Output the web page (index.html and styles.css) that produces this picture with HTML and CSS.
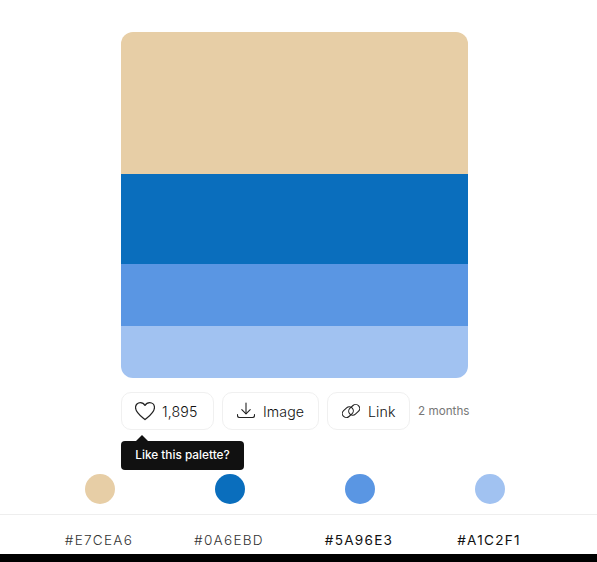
FILE: index.html
```html
<!DOCTYPE html>
<html lang="en">
<head>
    <meta charset="UTF-8">
    <meta name="viewport" content="width=device-width, initial-scale=1.0">
    <title>Palette</title>
    <link rel="stylesheet" href="styles.css">
</head>
<body>
    <main class="page">
        <div class="palette">
            <div class="strip strip-1"></div>
            <div class="strip strip-2"></div>
            <div class="strip strip-3"></div>
            <div class="strip strip-4"></div>
        </div>

        <div class="actions">
            <button class="btn btn-like">
                <svg width="20" height="20" viewBox="1.5 1.5 19 19" fill="none" stroke="#222" stroke-width="1.15" stroke-linejoin="round">
                    <path d="M11 19.2 C8 16.6 2 12.6 2 7.7 C2 4.9 4.1 3 6.6 3 C8.4 3 10 3.9 11 5.7 C12 3.9 13.6 3 15.4 3 C17.9 3 20 4.9 20 7.7 C20 12.6 14 16.6 11 19.2 Z"/>
                </svg>
                <span>1,895</span>
            </button>
            <button class="btn btn-image">
                <svg width="18" height="18" viewBox="1 1 18 18" fill="none" stroke="#222" stroke-width="1.1" stroke-linecap="round" stroke-linejoin="round">
                    <path d="M10 2 V12.5"/>
                    <path d="M5.8 8.6 L10 12.8 L14.2 8.6"/>
                    <path d="M1.5 13.5 V14.5 Q1.5 16.5 3.5 16.5 H16.5 Q18.5 16.5 18.5 14.5 V13.5"/>
                </svg>
                <span>Image</span>
            </button>
            <button class="btn btn-link">
                <svg width="18" height="18" viewBox="1 1 18 18" fill="none" stroke="#222" stroke-width="1.1">
                    <rect x="0.8" y="7.2" width="12" height="8" rx="4" transform="rotate(-42 6.8 11.2)"/>
                    <rect x="7.2" y="4.8" width="12" height="8" rx="4" transform="rotate(-42 13.2 8.8)"/>
                </svg>
                <span>Link</span>
            </button>
            <span class="age">2 months</span>
            <div class="tooltip">Like this palette?</div>
        </div>

        <div class="dots">
            <div class="dot-cell"><div class="dot dot-1"></div></div>
            <div class="dot-cell"><div class="dot dot-2"></div></div>
            <div class="dot-cell"><div class="dot dot-3"></div></div>
            <div class="dot-cell"><div class="dot dot-4"></div></div>
        </div>

        <div class="codes">
            <div class="code code-light">#E7CEA6</div>
            <div class="code code-light">#0A6EBD</div>
            <div class="code">#5A96E3</div>
            <div class="code">#A1C2F1</div>
        </div>
    </main>
    <div class="bottom-bar"></div>
</body>
</html>
```

FILE: styles.css
```css
html, body {
    margin: 0;
    padding: 0;
    background-color: #fff;
    overflow: hidden;
}

body {
    font-family: Inter, "Liberation Sans", sans-serif;
    color: #222;
    height: 562px;
    display: flex;
    flex-direction: column;
}

.page {
    flex: 1;
    padding-top: 32px;
}

.palette {
    width: 347px;
    height: 346px;
    margin-left: 121px;
    border-radius: 12px;
    overflow: hidden;
    display: flex;
    flex-direction: column;
}

.strip-1 { height: 142px; background-color: #e7cea6; }
.strip-2 { height: 90px; background-color: #0a6ebd; }
.strip-3 { height: 62px; background-color: #5a96e3; }
.strip-4 { height: 52px; background-color: #a1c2f1; }

.actions {
    position: relative;
    display: flex;
    align-items: center;
    gap: 8px;
    margin-top: 14px;
    margin-left: 121px;
    height: 38px;
}

.btn {
    display: flex;
    align-items: center;
    gap: 8px;
    height: 38px;
    padding: 0 0 0 14px;
    box-sizing: border-box;
    background-color: #fff;
    border: 1px solid #f0f0f0;
    border-radius: 10px;
    font-family: inherit;
    font-size: 14.2px;
    font-weight: 300;
    letter-spacing: 0.1px;
    color: #111;
    cursor: pointer;
}

.btn-like { width: 93px; padding-left: 13px; gap: 7px; }
.btn-image { width: 97px; }
.btn-link { width: 83px; }

.age {
    font-size: 11.7px;
    color: #777;
}

.tooltip {
    position: absolute;
    top: 49px;
    left: 0;
    width: 123px;
    height: 29px;
    line-height: 28px;
    text-align: center;
    background-color: #111;
    color: #fff;
    font-size: 11.8px;
    font-weight: 500;
    border-radius: 4px;
}

.tooltip::before {
    content: "";
    position: absolute;
    top: -6px;
    left: 15px;
    border-left: 6px solid transparent;
    border-right: 6px solid transparent;
    border-bottom: 6px solid #111;
}

.dots {
    display: flex;
    padding-left: 35px;
    margin-top: 44px;
    padding-bottom: 10px;
    border-bottom: 1px solid #eee;
}

.dot-cell {
    width: 130px;
    display: flex;
    justify-content: center;
}

.dot {
    width: 30px;
    height: 30px;
    border-radius: 50%;
}

.dot-1 { background-color: #e7cea6; }
.dot-2 { background-color: #0a6ebd; }
.dot-3 { background-color: #5a96e3; }
.dot-4 { background-color: #a1c2f1; }

.codes {
    display: flex;
    padding-left: 34px;
    margin-top: 16px;
}

.code {
    width: 130px;
    text-align: center;
    font-size: 13.6px;
    line-height: 18px;
    letter-spacing: 1.25px;
    color: #111;
}

.code-light {
    font-weight: 300;
    color: #333;
}

.bottom-bar {
    height: 8px;
    background-color: #000;
}
```
